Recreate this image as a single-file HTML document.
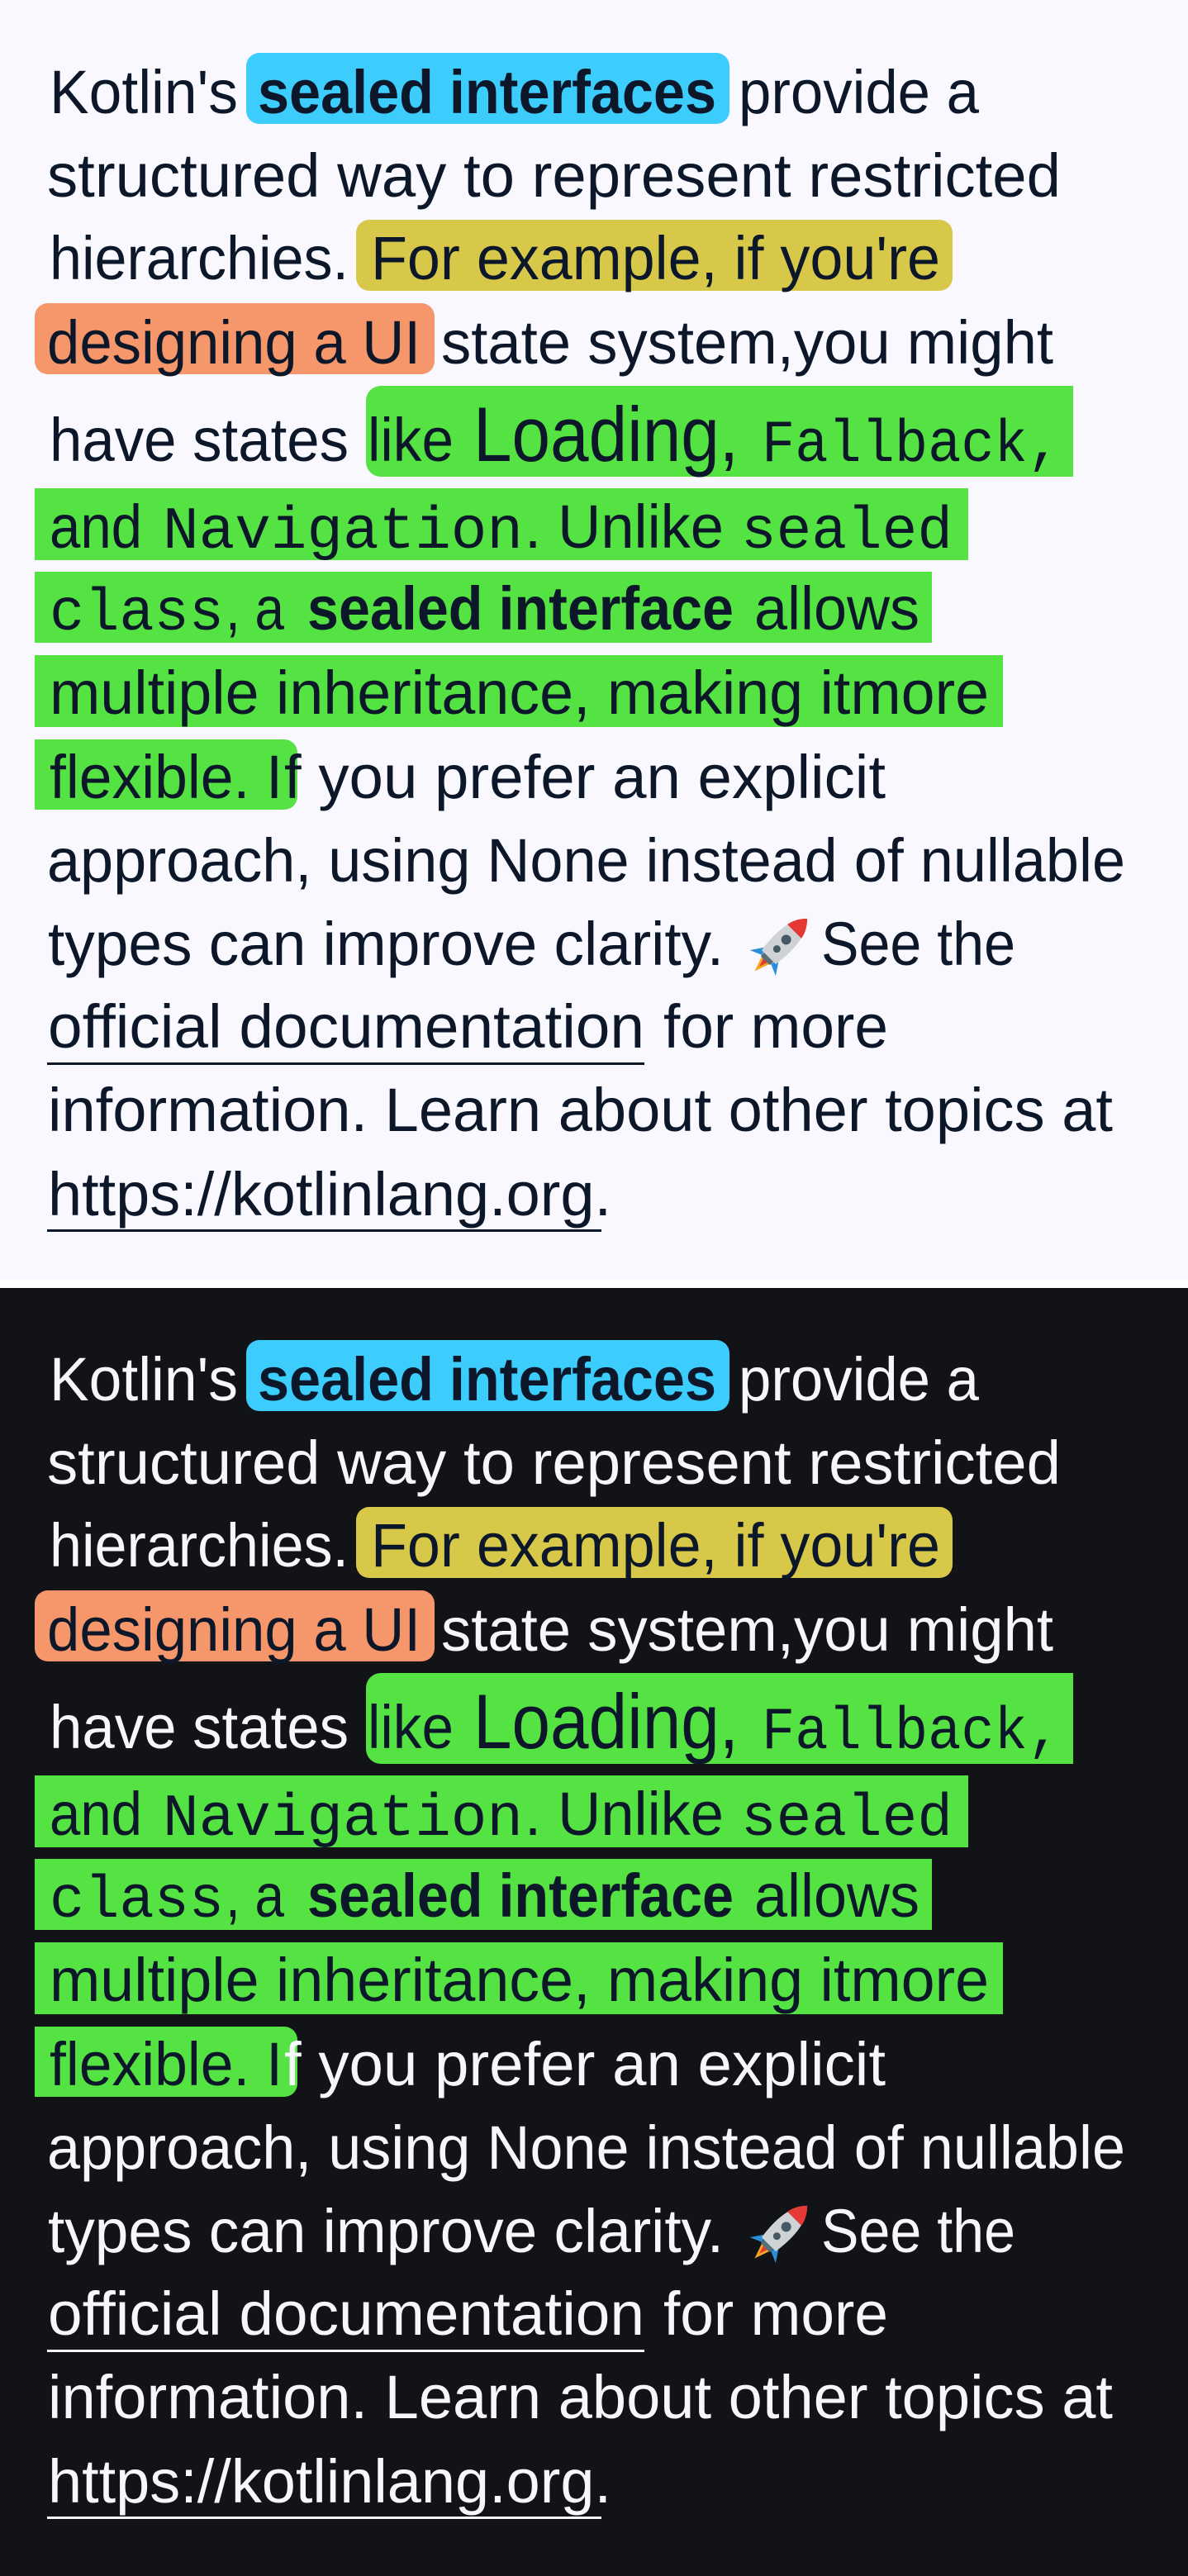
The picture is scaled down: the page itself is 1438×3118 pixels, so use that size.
<!DOCTYPE html>
<html><head><meta charset="utf-8"><style>
html,body{margin:0;padding:0;width:1438px;height:3118px;overflow:hidden;background:#fff}
svg{display:block}
text{font-family:"Liberation Sans",sans-serif;font-size:74px}
.b{font-weight:bold}
.m{font-family:"Liberation Mono","DejaVu Sans Mono",monospace;font-size:72px}
.d{fill:#0c1729}
</style></head><body>
<svg width="1438" height="3118" viewBox="0 0 1438 3118" xmlns="http://www.w3.org/2000/svg">
<defs>
<g id="rocket">
  <g transform="translate(946,1143) rotate(45)">
    <path d="M-10,14 L-22,32 L-8,26 Z" fill="#2a8fd8"/>
    <path d="M10,14 L22,32 L8,26 Z" fill="#2a8fd8"/>
    <path d="M-7,26 L0,46 L7,26 Z" fill="#f5a623"/>
    <path d="M-4,26 L0,38 L4,26 Z" fill="#e53935"/>
    <rect x="-8" y="20" width="16" height="8" rx="2" fill="#546e7a"/>
    <path d="M0,-44 C14,-30 16,-6 12,22 L-12,22 C-16,-6 -14,-30 0,-44 Z" fill="#cfd3d6"/>
    <path d="M0,-44 C8,-36 11,-28 12,-22 L-12,-22 C-11,-28 -8,-36 0,-44 Z" fill="#e53935"/>
    <circle cx="0" cy="-8" r="6" fill="#455a64"/>
    <circle cx="0" cy="8" r="4.5" fill="#455a64"/>
  </g>
</g>
<g id="panel">
  <rect x="298" y="64" width="585" height="86" rx="16" fill="#3ccdfd"/>
  <rect x="431" y="266" width="722" height="86" rx="16" fill="#d8c84a"/>
  <rect x="42" y="367" width="484" height="86" rx="16" fill="#f6966b"/>
  <rect x="443" y="467" width="856" height="110" rx="18" fill="#55e343"/>
  <rect x="470" y="467" width="829" height="110" fill="#55e343"/>
  <rect x="42" y="591" width="1130" height="87" fill="#55e343"/>
  <rect x="42" y="692" width="1086" height="86" fill="#55e343"/>
  <rect x="42" y="793" width="1172" height="87" fill="#55e343"/>
  <rect x="42" y="895" width="318" height="85" rx="16" fill="#55e343"/>
  <rect x="42" y="895" width="290" height="85" fill="#55e343"/>
  <text x="60" y="137" textLength="228" lengthAdjust="spacingAndGlyphs">Kotlin's</text>
  <text class="b d" x="312" y="137" textLength="555" lengthAdjust="spacingAndGlyphs">sealed interfaces</text>
  <text x="894" y="137" textLength="291" lengthAdjust="spacingAndGlyphs">provide a</text>
  <text x="57" y="238" textLength="1227" lengthAdjust="spacingAndGlyphs">structured way to represent restricted</text>
  <text x="60" y="338" textLength="362" lengthAdjust="spacingAndGlyphs">hierarchies.</text>
  <text class="d" x="449" y="338" textLength="689" lengthAdjust="spacingAndGlyphs">For example, if you're</text>
  <text class="d" x="57" y="440" textLength="452" lengthAdjust="spacingAndGlyphs">designing a UI</text>
  <text x="534" y="440" textLength="741" lengthAdjust="spacingAndGlyphs">state system,you might</text>
  <text x="60" y="558" textLength="362" lengthAdjust="spacingAndGlyphs">have states</text>
  <text class="d" x="445" y="558" textLength="104" lengthAdjust="spacingAndGlyphs">like</text>
  <text class="d" x="573" y="558" style="font-size:94px" textLength="321" lengthAdjust="spacingAndGlyphs">Loading,</text>
  <text class="m d" x="922" y="558" textLength="362" lengthAdjust="spacingAndGlyphs">Fallback,</text>
  <text class="d" x="60" y="663" textLength="112" lengthAdjust="spacingAndGlyphs">and</text>
  <text class="m d" x="197" y="663" textLength="436" lengthAdjust="spacingAndGlyphs">Navigation</text>
  <text class="d" x="635" y="663" textLength="241" lengthAdjust="spacingAndGlyphs">. Unlike</text>
  <text class="m d" x="897" y="663" textLength="256" lengthAdjust="spacingAndGlyphs">sealed</text>
  <text class="m d" x="60" y="762" textLength="211" lengthAdjust="spacingAndGlyphs">class</text>
  <text class="d" x="273" y="762" textLength="71" lengthAdjust="spacingAndGlyphs">, a</text>
  <text class="b d" x="372" y="762" textLength="516" lengthAdjust="spacingAndGlyphs">sealed interface</text>
  <text class="d" x="913" y="762" textLength="200" lengthAdjust="spacingAndGlyphs">allows</text>
  <text class="d" x="60" y="864" textLength="1137" lengthAdjust="spacingAndGlyphs">multiple inheritance, making itmore</text>
  <text class="d" x="60" y="966" textLength="282" lengthAdjust="spacingAndGlyphs">flexible. I</text>
  <text x="344" y="966" textLength="728" lengthAdjust="spacingAndGlyphs">f you prefer an explicit</text>
  <text x="57" y="1067" textLength="1305" lengthAdjust="spacingAndGlyphs">approach, using None instead of nullable</text>
  <text x="58" y="1168" textLength="818" lengthAdjust="spacingAndGlyphs">types can improve clarity.</text>
  <use href="#rocket"/>
  <text x="994" y="1168" textLength="235" lengthAdjust="spacingAndGlyphs">See the</text>
  <text x="58" y="1268" textLength="722" lengthAdjust="spacingAndGlyphs">official documentation</text>
  <rect x="57" y="1286" width="723" height="3"/>
  <text x="803" y="1268" textLength="272" lengthAdjust="spacingAndGlyphs">for more</text>
  <text x="58" y="1369" textLength="1289" lengthAdjust="spacingAndGlyphs">information. Learn about other topics at</text>
  <text x="58" y="1471" textLength="682" lengthAdjust="spacingAndGlyphs">https://kotlinlang.org.</text>
  <rect x="57" y="1488" width="671" height="3"/>
</g>
</defs>
<rect x="0" y="0" width="1438" height="1549" fill="#f8f8fe"/>
<rect x="0" y="1549" width="1438" height="10" fill="#ffffff"/>
<rect x="0" y="1559" width="1438" height="1559" fill="#121317"/>
<use href="#panel" fill="#0c1729"/>
<use href="#panel" fill="#f6f7fa" transform="translate(0,1558)"/>
</svg>
</body></html>
